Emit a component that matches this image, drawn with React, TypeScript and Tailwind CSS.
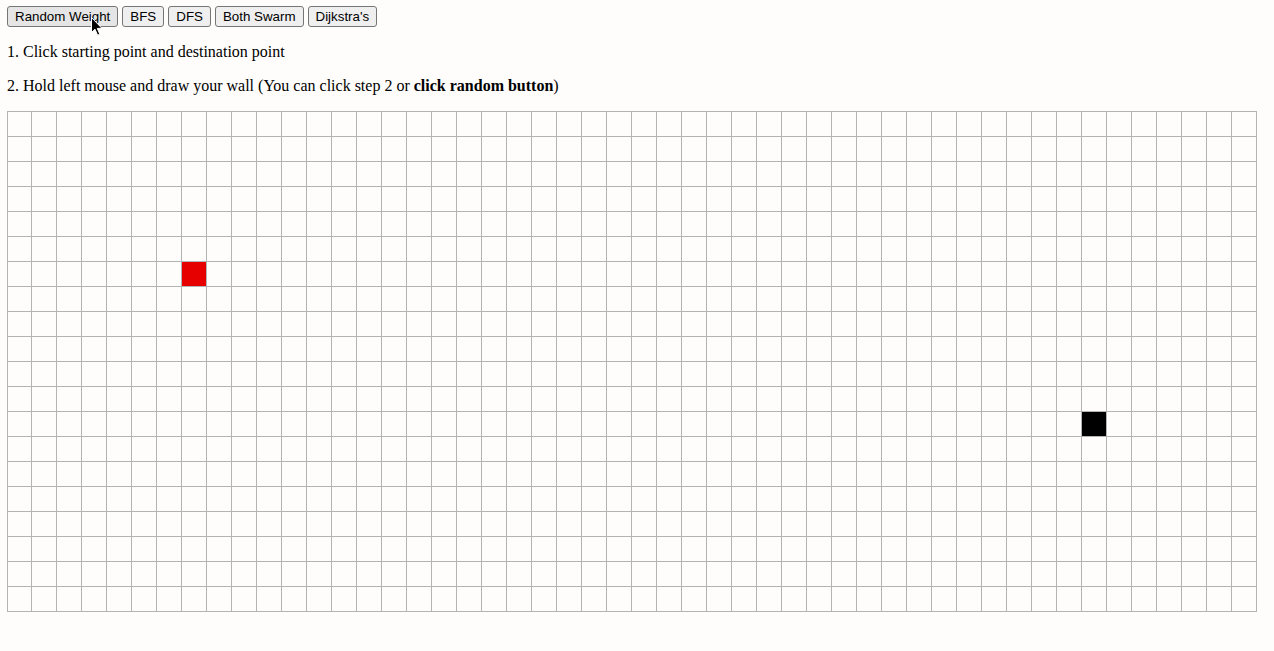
import React from "react";

const COLS = 50;
const ROWS = 20;

function Cursor() {
  return (
    <svg
      className="absolute left-[91px] top-[17px] pointer-events-none"
      width="12"
      height="19"
      viewBox="0 0 12 19"
    >
      <path
        d="M0.5 0.5 L0.5 15.5 L4 12.2 L6.6 18.2 L8.8 17.2 L6.3 11.4 L11 11.4 Z"
        fill="#000"
        stroke="#fff"
        strokeWidth="1"
      />
    </svg>
  );
}

export default function App() {
  const cells = [];
  for (let r = 0; r < ROWS; r++) {
    for (let c = 0; c < COLS; c++) {
      let bg = "";
      if (r === 6 && c === 7) bg = "bg-[#e60000]";
      else if (r === 12 && c === 43) bg = "bg-black";
      cells.push(
        <div
          key={`${r}-${c}`}
          className={`h-[25px] border-r border-b border-[#b3b3b3] ${bg}`}
        />
      );
    }
  }
  const btn =
    "h-[21px] px-[7px] border border-[#767676] rounded-[3px] text-[13.333px] leading-[15px] text-black font-['Liberation_Sans',Arial,sans-serif]";
  return (
    <div className="relative min-h-[651px] w-full bg-[#fefdfb] pt-[6px] pl-[7px] font-['Liberation_Serif','Times_New_Roman',serif] text-black">
      <div className="flex gap-[4px]">
        <button className={`${btn} bg-[#e5e5e5]`}>Random Weight</button>
        <button className={`${btn} bg-[#efefef]`}>BFS</button>
        <button className={`${btn} bg-[#efefef]`}>DFS</button>
        <button className={`${btn} bg-[#efefef]`}>Both Swarm</button>
        <button className={`${btn} bg-[#efefef]`}>Dijkstra's</button>
      </div>
      <p className="mt-[16px] text-[16px] leading-[18px]">
        1. Click starting point and destination point
      </p>
      <p className="mt-[16px] text-[16px] leading-[18px]">
        2. Hold left mouse and draw your wall (You can click step 2 or{" "}
        <b>click random button</b>)
      </p>
      <div className="mt-[16px] grid w-[1250px] grid-cols-[24px_repeat(49,25px)] border-l border-t border-[#b3b3b3]">
        {cells}
      </div>
      <Cursor />
    </div>
  );
}
